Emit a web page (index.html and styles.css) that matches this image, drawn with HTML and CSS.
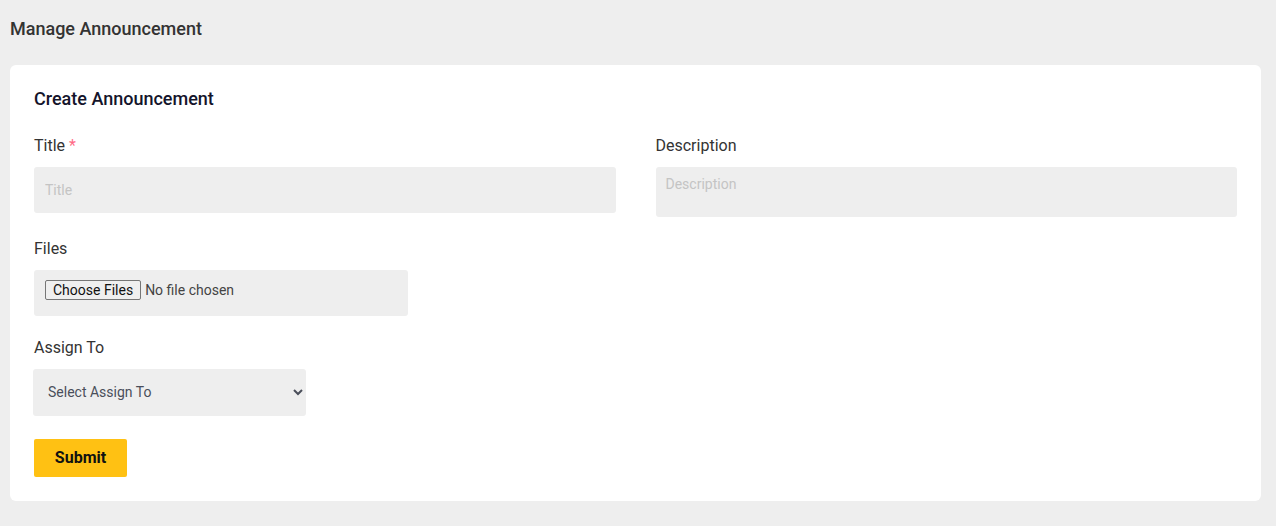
FILE: index.html
```html
<!DOCTYPE html>
<html lang="en">
<head>
<meta charset="utf-8">
<title>Manage Announcement</title>
<link rel="stylesheet" href="styles.css">
</head>
<body>
<div class="page">
  <h1 class="page-title">Manage Announcement</h1>
  <div class="card">
    <h2 class="card-title">Create Announcement</h2>
    <form class="form">
      <div class="row">
        <div class="group">
          <label class="label" for="title">Title <span class="req">*</span></label>
          <input class="input" id="title" type="text" placeholder="Title">
        </div>
        <div class="group">
          <label class="label" for="desc">Description</label>
          <textarea class="textarea" id="desc" placeholder="Description"></textarea>
        </div>
      </div>
      <div class="group">
        <label class="label" for="files">Files</label>
        <div class="file-box"><input class="file" id="files" type="file" multiple></div>
      </div>
      <div class="group">
        <label class="label" for="assign">Assign To</label>
        <select class="select" id="assign">
          <option>Select Assign To</option>
        </select>
      </div>
      <button class="submit" type="button">Submit</button>
    </form>
  </div>
</div>
</body>
</html>
```
FILE: styles.css
```css
* { box-sizing: border-box; }
html, body { margin: 0; padding: 0; background: #eeeeee; }
body { font-family: Roboto, "Liberation Sans", Arial, sans-serif; color: #333; }
.page { padding: 18px 15px 25px 10px; }
.page-title {
  margin: 0 0 26px 0;
  font-size: 18px;
  line-height: 21px;
  font-weight: 500;
  color: #333;
}
.card {
  background: #fff;
  border-radius: 6px;
  padding: 23px 24px 24px 24px;
}
.card-title {
  margin: 0 0 27px 0;
  font-size: 18px;
  line-height: 21px;
  font-weight: 500;
  color: #14142b;
}
.form { display: flex; flex-direction: column; }
.row {
  display: grid;
  grid-template-columns: 1fr 1fr;
  column-gap: 40px;
}
.group { display: flex; flex-direction: column; align-items: flex-start; margin-bottom: 22px; }
.row .group { align-items: stretch; }
.label {
  font-size: 16px;
  line-height: 19px;
  margin-bottom: 12px;
  color: #333;
}
.req { color: #ff6b86; }
.input, .textarea {
  border: none;
  border-radius: 3px;
  background: #eeeeee;
  font-family: Roboto, "Liberation Sans", Arial, sans-serif;
  font-size: 14px;
  color: #333;
  outline: none;
}
.input { height: 46px; padding: 0 11px; }
.textarea { height: 50px; padding: 9px 10px; resize: none; display: block; }
.input::placeholder, .textarea::placeholder { color: #c4c4c4; }
.file-box {
  width: 374px;
  height: 46px;
  background: #eeeeee;
  border-radius: 3px;
  padding: 10px 11px 0 11px;
}
.file {
  font-family: Roboto, "Liberation Sans", Arial, sans-serif;
  font-size: 14px;
  line-height: 18px;
  color: #444;
}
.file::file-selector-button {
  font-family: Roboto, "Liberation Sans", Arial, sans-serif;
  font-size: 14px;
  padding: 0 7px;
  height: 20px;
  margin-right: 4px;
  border: 1px solid #767676;
  border-radius: 2px;
  background: #efefef;
  color: #111;
}
.select {
  width: 273px;
  height: 47px;
  margin-left: -1px;
  border: none;
  border-radius: 3px;
  background-color: #eeeeee;
  font-family: Roboto, "Liberation Sans", Arial, sans-serif;
  font-size: 14px;
  color: #4a4e5a;
  padding: 0 10px 1px 11px;
  outline: none;
}
.submit {
  align-self: flex-start;
  width: 93px;
  height: 38px;
  border: none;
  border-radius: 2px;
  background: #ffc113;
  color: #111;
  font-family: Roboto, "Liberation Sans", Arial, sans-serif;
  font-size: 16px;
  font-weight: 700;
  padding: 0 0 2px 0;
  margin-top: 1px;
}
```
